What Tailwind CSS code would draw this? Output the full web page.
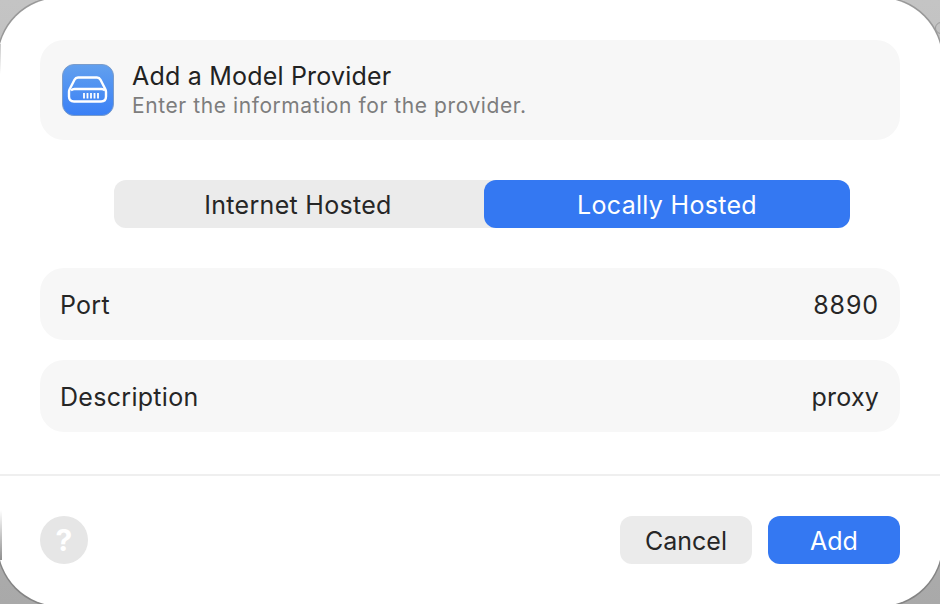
<!DOCTYPE html>
<html lang="en">
<head>
  <meta charset="UTF-8" />
  <title>Add a Model Provider</title>
  <script src="https://cdn.jsdelivr.net/npm/@tailwindcss/browser@4"></script>
</head>
<body class="relative w-[940px] h-[604px] overflow-hidden bg-gradient-to-b from-[#c4c4c4] to-[#a9a9a9] font-['Inter','Liberation_Sans',sans-serif] text-[#262626]">
  <!-- panel runs 2px past the window so only the corners show an edge -->
  <div class="-m-[2px] w-[944px] h-[608px] p-[2px] bg-white rounded-[62px] flex flex-col shadow-[0_0_0_1.5px_rgba(0,0,0,0.22)]">

    <div class="px-10 pt-10 flex flex-col">
      <!-- Header -->
      <div class="h-[100px] bg-[#f7f7f7] rounded-3xl flex items-center pl-[22px] gap-[18px]">
        <svg class="w-[52px] h-[52px] shrink-0" viewBox="0 0 52 52" fill="none">
          <defs>
            <linearGradient id="tile" x1="0" y1="0" x2="0" y2="1">
              <stop offset="0" stop-color="#62a0ee" />
              <stop offset="1" stop-color="#3a80f6" />
            </linearGradient>
          </defs>
          <rect x="0.5" y="0.5" width="51" height="51" rx="11.5" fill="url(#tile)" stroke="#7a9ccb" />
          <path d="M17 13.500h18q2.400 0 3.500 2.200l5 9.800q0.500 1 0.500 2.500v4.500q0 5-5 5h-27q-5 0-5-5v-4.500q0-1.500 0.500-2.500l5-9.800q1.100-2.200 3.500-2.200z" stroke="#fff" stroke-width="2.400" stroke-linejoin="round" />
          <path d="M9 26.500q1.500-1.500 3.500-1.500h27q2 0 3.500 1.500" stroke="#fff" stroke-width="2.400" />
          <path d="M22 29v5.500M25.500 29v5.500M29 29v5.500M32.500 29v5.500M36 29v5.500" stroke="#fff" stroke-width="1.800" />
        </svg>
        <div class="flex flex-col">
          <div class="text-[25px] leading-[30px] tracking-[0.2px] text-[#222222]">Add a Model Provider</div>
          <div class="text-[21px] leading-[29px] tracking-[0.58px] text-[#7d7d7d]">Enter the information for the provider.</div>
        </div>
      </div>

      <!-- Segmented control -->
      <div class="mt-10 ml-[74px] w-[736px] h-12 bg-[#ebebeb] rounded-xl flex text-[25px] tracking-[0.3px]">
        <div class="w-[370px] pt-1 pr-0.5 flex items-center justify-center">Internet Hosted</div>
        <div class="w-[366px] pt-1 flex items-center justify-center bg-[#3478f2] text-white rounded-xl">Locally Hosted</div>
      </div>

      <!-- Fields -->
      <div class="mt-10 h-[72px] pt-1 bg-[#f7f7f7] rounded-3xl flex items-center justify-between pl-5 pr-[21px] text-[25px]">
        <span class="tracking-[0.25px]">Port</span>
        <span class="tracking-[0.9px]">8890</span>
      </div>
      <div class="mt-5 h-[72px] pt-1 bg-[#f7f7f7] rounded-3xl flex items-center justify-between pl-5 pr-[21px] text-[25px]">
        <span class="tracking-[0.3px]">Description</span>
        <span class="tracking-[0.2px]">proxy</span>
      </div>
    </div>

    <div class="mt-[42px] h-0.5 bg-[#efefef]"></div>

    <!-- Footer -->
    <div class="mt-10 px-10 flex items-center justify-between">
      <div class="w-12 h-12 rounded-full bg-[#e6e6e6] flex items-center justify-center text-white text-[30px] font-bold">?</div>
      <div class="flex gap-4 text-[25px]">
        <div class="w-[132px] h-12 pt-1 rounded-xl bg-[#ebebeb] flex items-center justify-center">Cancel</div>
        <div class="w-[132px] h-12 pt-1 rounded-xl bg-[#3478f2] text-white flex items-center justify-center">Add</div>
      </div>
    </div>
  </div>

  <!-- window edge bits -->
  <div class="absolute left-0 bottom-[44px] w-[2px] h-[50px] bg-gradient-to-b from-transparent to-[#8f8f8f]"></div>
  <div class="absolute left-0 top-[44px] w-px h-[30px] bg-gradient-to-b from-[#c8c8c8] to-transparent"></div>
  <div class="absolute left-[935px] top-[22px] w-3 h-3 rounded-full border-[1.5px] border-[#9a9a9a]"></div>
</body>
</html>
